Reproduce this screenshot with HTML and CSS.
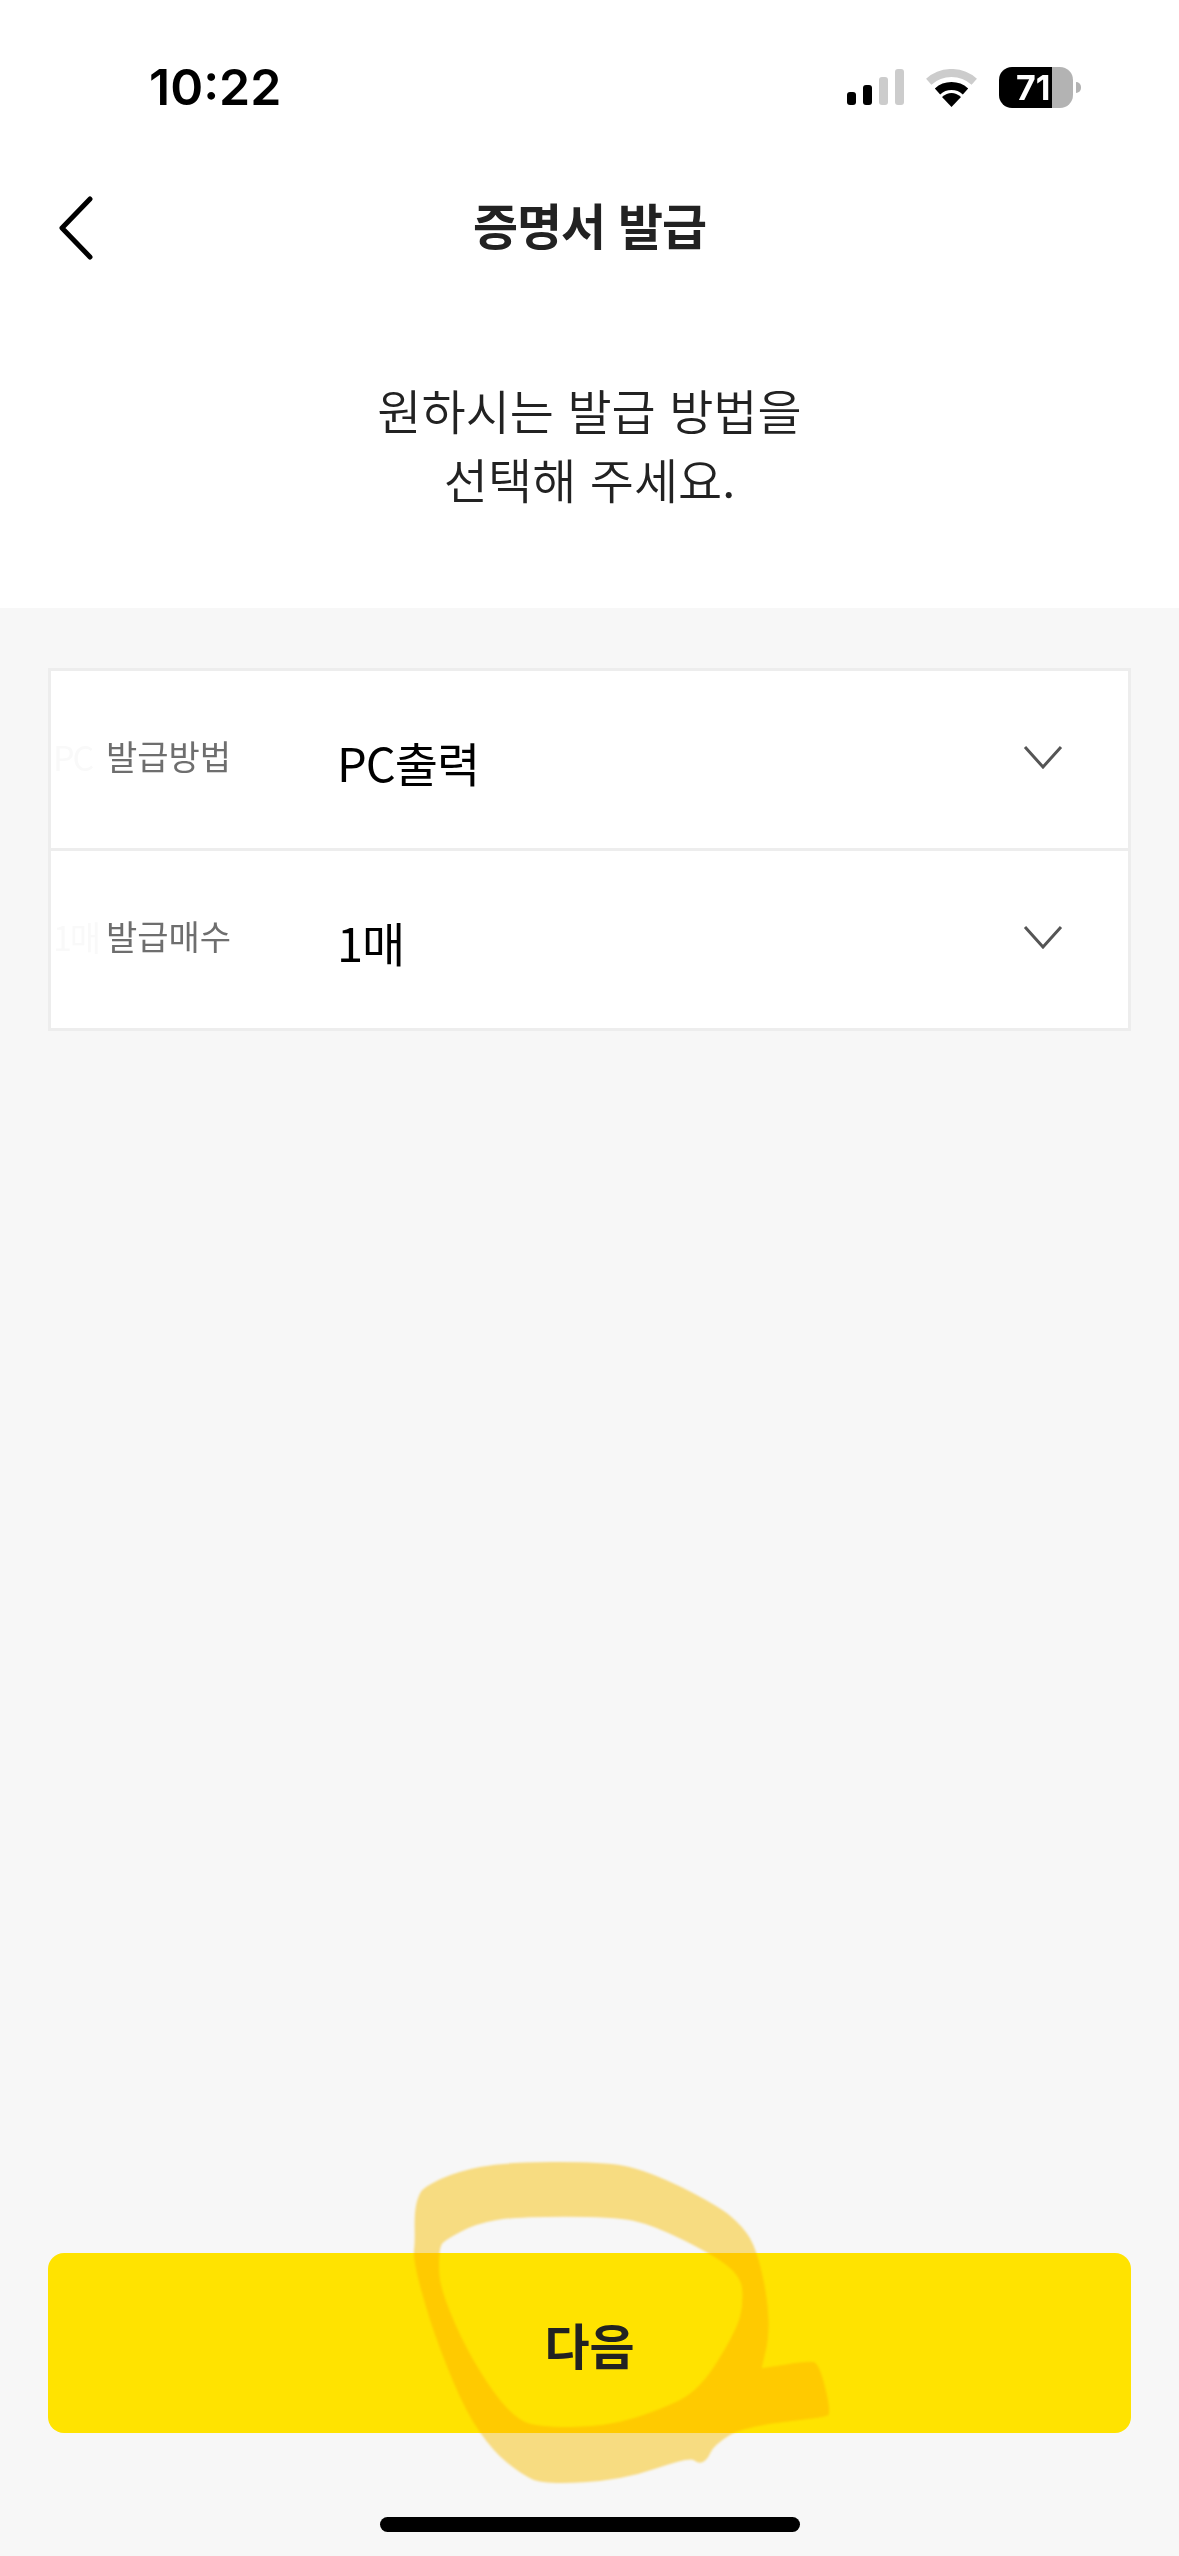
FILE: index.html
```html
<!DOCTYPE html>
<html lang="ko">
<head>
  <meta charset="UTF-8" />
  <title>증명서 발급</title>
  <link rel="stylesheet" href="styles.css">
</head>
<body>
  <div class="screen">
    <div class="status-bar">
      <span class="time">10:22</span>
      <div class="status-icons">
        <div class="signal">
          <span class="bar bar-1"></span>
          <span class="bar bar-2"></span>
          <span class="bar bar-3 off"></span>
          <span class="bar bar-4 off"></span>
        </div>
        <svg class="wifi" width="52" height="40" viewBox="0 0 52 40">
          <path d="M2.75 12.7A34 34 0 0 1 48.25 12.7" fill="none" stroke="#cccccc" stroke-width="8"/>
          <path d="M11.5 22.4A21 21 0 0 1 39.5 22.4" fill="none" stroke="#000" stroke-width="8"/>
          <path d="M25.5 38L16 28Q25.5 20 35 28Z" fill="#000"/>
        </svg>
        <div class="battery">
          <div class="battery-body">
            <span class="battery-level">71</span>
          </div>
          <span class="battery-cap"></span>
        </div>
      </div>
    </div>

    <div class="header">
      <svg class="back" width="36" height="64" viewBox="0 0 36 64">
        <path d="M32 3L4 32L32 61" fill="none" stroke="#000" stroke-width="5" stroke-linecap="round" stroke-linejoin="round"/>
      </svg>
      <h1>증명서 발급</h1>
    </div>

    <p class="intro">원하시는 발급 방법을<br>선택해 주세요.</p>

    <div class="content">
      <div class="select-list">
        <div class="select-row">
          <span class="ghost">PC</span>
          <span class="label">발급방법</span>
          <span class="value">PC출력</span>
          <svg class="chevron" width="40" height="24" viewBox="0 0 40 24">
            <path d="M2 2L20 22L38 2" fill="none" stroke="#555" stroke-width="3"/>
          </svg>
        </div>
        <div class="select-row">
          <span class="ghost">1매</span>
          <span class="label">발급매수</span>
          <span class="value">1매</span>
          <svg class="chevron" width="40" height="24" viewBox="0 0 40 24">
            <path d="M2 2L20 22L38 2" fill="none" stroke="#555" stroke-width="3"/>
          </svg>
        </div>
      </div>
      <button class="next-btn" type="button">다음</button>
      <div class="home-indicator"></div>
    </div>

    <!-- 형광펜 표시 -->
    <svg class="marker" width="520" height="426" viewBox="0 0 1560 1278">
      <path fill="#ffe385" fill-rule="evenodd" d="M164 295Q163 250 169 222Q175 195 185 182Q195 170 242 147Q290 125 360 111Q430 97 575 96Q720 95 790 107Q860 120 965 172Q1070 225 1110 257Q1150 290 1170 325Q1190 360 1206 430Q1222 500 1225 560Q1228 620 1216 667L1205 715L1275 704Q1345 693 1361 696Q1378 700 1396 775Q1414 850 1404 856Q1395 862 1272 876Q1150 890 1106 917Q1062 945 1052 967Q1042 990 1028 996Q1015 1002 1002 991Q990 980 890 1015Q790 1050 670 1057Q550 1064 515 1047Q480 1030 440 997Q400 965 360 907Q320 850 280 755Q240 660 212 575Q185 490 172 435Q160 380 162 360Q165 340 164 295Z M247 340Q255 330 302 305Q350 280 410 270Q470 260 615 260Q760 260 820 272Q880 285 970 330Q1060 375 1102 407Q1145 440 1147 480Q1150 520 1140 560Q1130 600 1075 690Q1020 780 960 810Q900 840 820 865Q740 890 635 891Q530 892 495 876Q460 860 420 810Q380 760 340 690Q300 620 270 545Q240 470 238 435Q236 400 238 375Q240 350 247 340Z"/>
    </svg>
  </div>
</body>
</html>
```

FILE: styles.css
```css
body {
  margin: 0;
  background-color: #ffffff;
  font-family: "Noto Sans CJK KR", "Noto Sans", sans-serif;
  color: #222222;
}

.screen {
  position: relative;
  width: 1179px;
  height: 2556px;
  display: flex;
  flex-direction: column;
  overflow: hidden;
}

.status-bar {
  height: 150px;
  display: flex;
  justify-content: space-between;
  box-sizing: border-box;
  padding: 67px 98px 0 149px;
}

.time {
  font-family: Inter, sans-serif;
  font-size: 50px;
  font-weight: 600;
  line-height: 41px;
  color: #000;
}

.status-icons {
  display: flex;
  align-items: flex-start;
}

.signal {
  display: flex;
  align-items: flex-end;
  gap: 7px;
  height: 36px;
  margin-top: 2px;
  margin-right: 22px;
}

.bar {
  width: 9px;
  border-radius: 3px;
  background: #000;
}

.bar-1 { height: 13px; }
.bar-2 { height: 20px; }
.bar-3 { height: 28px; }
.bar-4 { height: 36px; }

.bar.off {
  background: #cccccc;
}

.wifi {
  margin-top: 2px;
  margin-right: 21px;
}

.battery {
  display: flex;
  align-items: center;
  height: 41px;
}

.battery-body {
  width: 74px;
  height: 41px;
  box-sizing: border-box;
  border-radius: 13px;
  background: linear-gradient(to right, #000 53px, #b3b3b3 53px);
  padding-left: 17px;
  color: #fff;
  font-family: Inter, sans-serif;
  font-size: 34px;
  font-weight: 700;
  line-height: 41px;
}

.battery-cap {
  width: 5px;
  height: 11px;
  margin-left: 3px;
  border-radius: 0 5px 5px 0;
  background: #b3b3b3;
}

.header {
  position: relative;
  height: 156px;
  display: flex;
  align-items: center;
  justify-content: center;
}

.back {
  position: absolute;
  left: 58px;
  top: 46px;
}

h1 {
  margin: 0;
  font-size: 49px;
  font-weight: 700;
  letter-spacing: -1px;
  padding-bottom: 10px;
}

.intro {
  margin: 0;
  height: 302px;
  box-sizing: border-box;
  padding-top: 69px;
  text-align: center;
  font-size: 48px;
  font-weight: 350;
  line-height: 69px;
}

.content {
  flex: 1;
  display: flex;
  flex-direction: column;
  background: #f7f7f7;
  padding: 60px 48px 0;
}

.select-list {
  border: 3px solid #ededed;
  border-bottom: 0;
  background: #ffffff;
}

.select-row {
  height: 177px;
  display: flex;
  align-items: center;
  border-bottom: 3px solid #ededed;
  padding-right: 65px;
}

.ghost {
  width: 55px;
  padding-left: 2px;
  box-sizing: border-box;
  font-size: 34px;
  letter-spacing: -2px;
  color: #f9f9f9;
  white-space: nowrap;
  padding-bottom: 6px;
}

.label {
  width: 231px;
  font-size: 34px;
  color: #6e6e6e;
  padding-bottom: 8px;
}

.value {
  flex: 1;
  font-size: 47px;
  letter-spacing: -1px;
  color: #000;
  padding-top: 4px;
}

.chevron {
  padding-bottom: 6px;
}

.next-btn {
  margin-top: auto;
  height: 180px;
  border: none;
  border-radius: 16px;
  background: #ffe300;
  color: #222222;
  font-family: inherit;
  font-size: 49px;
  font-weight: 600;
}

.home-indicator {
  width: 420px;
  height: 15px;
  margin: 84px auto 24px;
  border-radius: 8px;
  background: #000;
}

.marker {
  position: absolute;
  left: 360px;
  top: 2130px;
  mix-blend-mode: multiply;
  filter: blur(1.2px);
}
```
